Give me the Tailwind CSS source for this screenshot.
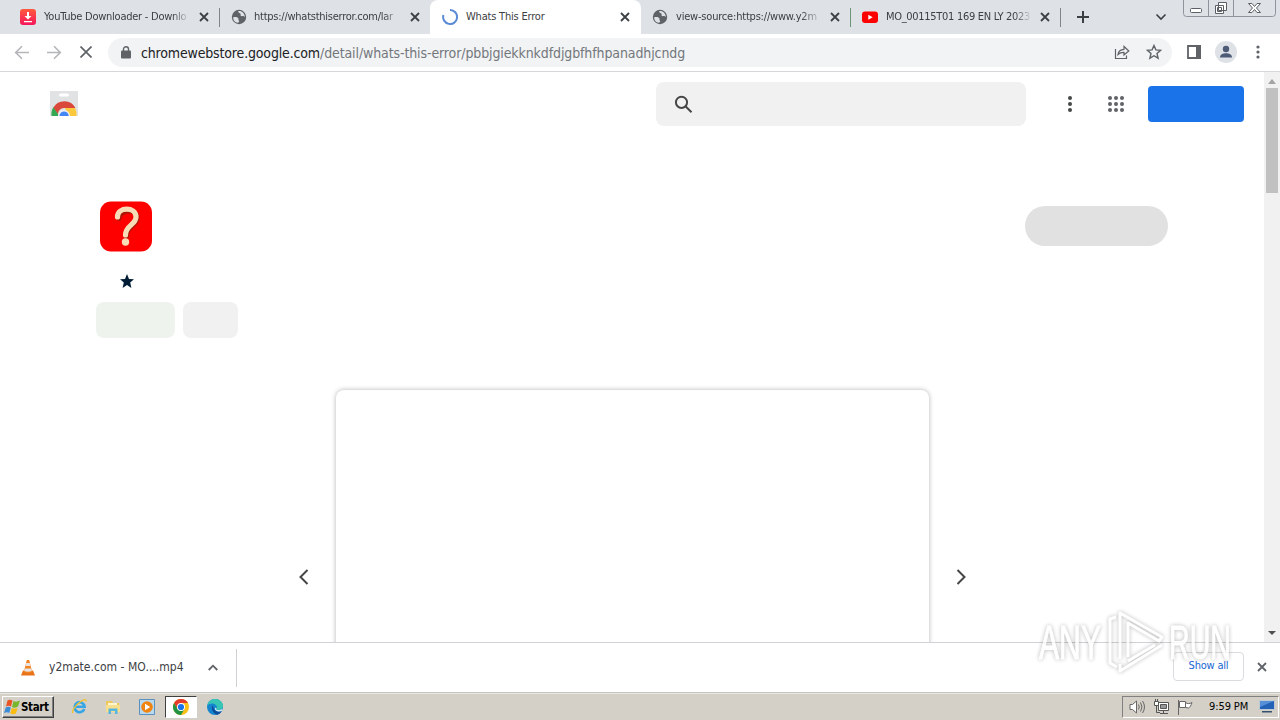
<!DOCTYPE html>
<html lang="en">
<head>
<meta charset="utf-8">
<title>Whats This Error</title>
<script src="https://cdn.jsdelivr.net/npm/@tailwindcss/browser@4"></script>
</head>
<body class="relative flex h-[720px] w-[1280px] flex-col overflow-hidden bg-white font-['DejaVu_Sans_Condensed','DejaVu_Sans','Noto_Sans',sans-serif] text-[11px] text-[#3c4043]">
<svg class="hidden">
  <symbol id="x" viewBox="0 0 10 10"><path d="M1 1l8 8M9 1L1 9" stroke="currentColor" stroke-width="1.8" fill="none"/></symbol>
  <symbol id="globe" viewBox="0 0 16 16"><circle cx="8" cy="8" r="7.2" fill="#5f6368"/><path d="M2.200 8.300C4 7.500 6.500 8 7.200 9s-.2 1.700.6 2.500.2 1.800-.9 2.200C4 13.700 2 11 2.200 8.300zM7 2.200c.8.600.3 1.500 1.300 1.900s1.700.8 1.300 1.900 1 1.300 2 1 1.700.6 2.100 1C14 4.500 10.500 1.500 7 2.200z" fill="#dee1e6"/></symbol>
</svg>

<!-- Tab strip -->
<header class="flex h-[34px] shrink-0 bg-[#dee1e6] tracking-[-0.2px]">
  <div class="flex h-full w-[220px] shrink-0 items-center pl-5">
    <svg class="size-4 shrink-0" viewBox="0 0 16 16"><defs><linearGradient id="dl" x2="0" y2="1"><stop stop-color="#ff5a3c"/><stop offset="1" stop-color="#f5165c"/></linearGradient></defs><rect width="16" height="16" rx="3" fill="url(#dl)"/><path d="M7 3h2v4h2.500L8 10.500 4.500 7H7zM4 12h8v1.300H4z" fill="#fff"/></svg>
    <span class="mt-px ml-2 w-[146px] shrink-0 overflow-hidden tracking-[-0.25px] whitespace-nowrap mask-r-from-88%">YouTube Downloader - Downlo</span>
    <svg class="ml-[9px] size-[10px] shrink-0"><use href="#x"/></svg>
    <i class="ml-auto h-[19px] w-px bg-[#808388]"></i>
  </div>
  <div class="flex h-full w-[210px] shrink-0 items-center pl-[11px]">
    <svg class="size-4 shrink-0"><use href="#globe"/></svg>
    <span class="mt-px ml-[7px] w-[147px] shrink-0 overflow-hidden tracking-[-0.25px] whitespace-nowrap mask-r-from-88%">https://whatsthiserror.com/lar</span>
    <svg class="ml-[9px] size-[10px] shrink-0"><use href="#x"/></svg>
  </div>
  <div class="flex h-full w-[211px] shrink-0 items-center rounded-t-lg bg-white pl-3">
    <svg class="size-4 shrink-0" viewBox="0 0 16 16"><path d="M8 1a7 7 0 1 1-6.600 5" fill="none" stroke="#5b8ad6" stroke-width="2"/></svg>
    <span class="mt-px ml-2 w-[146px] shrink-0 whitespace-nowrap">Whats This Error</span>
    <svg class="ml-[8px] size-[10px] shrink-0"><use href="#x"/></svg>
  </div>
  <div class="flex h-full w-[210px] shrink-0 items-center pl-[11px]">
    <svg class="size-4 shrink-0"><use href="#globe"/></svg>
    <span class="mt-px ml-2 w-[147px] shrink-0 overflow-hidden whitespace-nowrap mask-r-from-85%">view-source:https://www.y2m</span>
    <svg class="ml-[7px] size-[10px] shrink-0"><use href="#x"/></svg>
    <i class="ml-auto h-[19px] w-px bg-[#6c9477]"></i>
  </div>
  <div class="flex h-full w-[210px] shrink-0 items-center pl-[11px]">
    <svg class="size-4 shrink-0" viewBox="0 0 16 16"><rect y="2.500" width="16" height="11.500" rx="3" fill="#f00"/><path d="M6.300 5.700v5L10.700 8.200z" fill="#fff"/></svg>
    <span class="mt-px ml-2 w-[146px] shrink-0 overflow-hidden tracking-[-0.3px] whitespace-nowrap mask-r-from-88%">MO_00115T01 169 EN LY 2023</span>
    <svg class="ml-[8px] size-[10px] shrink-0"><use href="#x"/></svg>
    <i class="ml-auto h-[19px] w-px bg-[#808388]"></i>
  </div>
  <svg class="mt-[11px] ml-4 size-3 shrink-0" viewBox="0 0 12 12"><path d="M6 0v12M0 6h12" stroke="#3c4043" stroke-width="2"/></svg>
  <svg class="mt-[13px] ml-[66px] h-2 w-3 shrink-0" viewBox="0 0 12 8"><path d="M1.500 1.500L6 6l4.500-4.500" fill="none" stroke="#3c4043" stroke-width="1.600"/></svg>
  <svg class="ml-4 h-[17px] w-[94px] shrink-0" viewBox="0 0 94 17" fill="none"><path d="M.5 0v13.500q0 3 3 3h86q3 0 3-3V0M25.500 0v16M50.500 0v16" stroke="#8f939b"/><rect x="7.500" y="8.500" width="11" height="4" rx="1" fill="#fff" stroke="#5c5f66"/><path d="M35.500 2.500h8v8h-8zM32.500 5.500h8v8h-8z" fill="#fff" stroke="#5c5f66"/><path d="M34.500 7.500h4v4h-4z" stroke="#5c5f66"/><path d="M65.500 3.500h3.500l2.500 3 2.500-3h3.500L73.500 8l4 4.500H74l-2.500-3-2.500 3h-3.500l4-4.500z" fill="#fff" stroke="#5c5f66"/></svg>
</header>

<!-- Toolbar -->
<div class="flex h-[38px] shrink-0 items-center border-b border-[#d5d7da] bg-white">
  <svg class="ml-[14px] h-4 w-4" viewBox="0 0 16 16" fill="none" stroke="#b4b6b9" stroke-width="1.600"><path d="M15 7.500H2M8 1.200L1.700 7.500 8 13.800"/></svg>
  <svg class="ml-4 h-4 w-4" viewBox="0 0 16 16" fill="none" stroke="#b4b6b9" stroke-width="1.600"><path d="M1 7.500h13M8 1.200L14.300 7.500 8 13.800"/></svg>
  <svg class="mb-px ml-[18px] size-3" viewBox="0 0 12 12"><path d="M.5.500l11 11M11.500.500l-11 11" stroke="#5f6368" stroke-width="1.700"/></svg>
  <div class="ml-4 flex h-[29px] w-[1064px] items-center rounded-full bg-[#f1f3f4] pl-[13px] text-[14px]">
    <svg class="mb-px h-[13px] w-[10px]" viewBox="0 0 10 13"><rect y="4.500" width="10" height="8" rx="1" fill="#5f6368"/><path d="M2.500 5V3.200a2.500 2.500 0 0 1 5 0V5" fill="none" stroke="#5f6368" stroke-width="1.400"/></svg>
    <span class="mt-px ml-[10px] w-[179px] tracking-[-0.16px] whitespace-nowrap text-[#202124]">chromewebstore.google.com</span><span class="mt-px tracking-[-0.11px] whitespace-nowrap text-[#73777c]">/detail/whats-this-error/pbbjgiekknkdfdjgbfhfhpanadhjcndg</span>
    <svg class="mb-px ml-auto size-4" viewBox="0 0 16 16" fill="none" stroke="#5f6368" stroke-width="1.200"><path d="M1.500 5v9.500h11v-3M4 10.500c.5-3.500 2.500-5 6-5.200V2.500L14.800 7 10 11V8.300C7 8.200 5.500 9 4 10.500z"/></svg>
    <svg class="mr-[10px] mb-px ml-4 size-4" viewBox="0 0 16 16" fill="none" stroke="#5f6368" stroke-width="1.400"><path d="M8 1.500l1.900 4.400 4.700.4-3.600 3.200 1.100 4.700L8 11.700l-4.100 2.500L5 9.500 1.400 6.300l4.700-.4z"/></svg>
  </div>
  <svg class="mb-px ml-[15px] h-[14px] w-[14px]" viewBox="0 0 14 14"><path d="M1 1h12v12H1z" fill="none" stroke="#5f6368" stroke-width="1.800"/><path d="M9 0h5v14H9z" fill="#5f6368"/></svg>
  <svg class="mb-px ml-[14px] size-[22px]" viewBox="0 0 22 22"><circle cx="11" cy="11" r="11" fill="#dee1e6"/><circle cx="11" cy="8" r="3.200" fill="#4d5b76"/><path d="M5 16.500c0-3 3-4.300 6-4.300s6 1.300 6 4.300z" fill="#4d5b76"/></svg>
  <svg class="mb-px ml-[19px] h-[14px] w-1" viewBox="0 0 4 14" fill="#5f6368"><circle cx="2" cy="2" r="1.600"/><circle cx="2" cy="7" r="1.600"/><circle cx="2" cy="12" r="1.600"/></svg>
</div>

<!-- Page -->
<div class="flex h-[570px] shrink-0">
  <main class="flex w-[1264px] flex-col overflow-hidden">
    <div class="flex h-[64px] shrink-0 items-center pl-[49px]">
      <svg class="h-[26px] w-[30px]" viewBox="0 0 30 26"><path d="M1 0h28v25H1z" fill="#e1e2e4"/><rect x="10" y="2.500" width="10" height="3" rx="1.500" fill="#fff"/><path d="M2.500 25A12.500 12.500 0 0 1 5 15.500L10 25z" fill="#34a853"/><path d="M4.500 16.500A12.500 12.500 0 0 1 26.500 17H15a6 6 0 0 0-6 6z" fill="#d9483b"/><path d="M26 17a13 13 0 0 1 1.500 8H19l-3-8z" fill="#fdc93c"/><path d="M9 25a6 6 0 0 1 12 0z" fill="#f1f1f1"/><path d="M10.500 25a4.600 4.600 0 0 1 9.200 0z" fill="#4285f4"/></svg>
      <div class="ml-[577px] flex h-11 w-[370px] items-center rounded-lg bg-[#f1f1f1] pl-[18px]">
        <svg class="size-[19px]" viewBox="0 0 19 19" fill="none" stroke="#444746" stroke-width="2"><circle cx="7.500" cy="7.300" r="5.600"/><path d="M11.500 11.300l6 6"/></svg>
      </div>
      <svg class="ml-[42px] h-4 w-1" viewBox="0 0 4 16" fill="#444746"><circle cx="2" cy="2" r="2"/><circle cx="2" cy="8" r="2"/><circle cx="2" cy="14" r="2"/></svg>
      <svg class="ml-9 size-4" viewBox="0 0 16 16" fill="#5f6368"><circle cx="2" cy="2" r="2"/><circle cx="8" cy="2" r="2"/><circle cx="14" cy="2" r="2"/><circle cx="2" cy="8" r="2"/><circle cx="8" cy="8" r="2"/><circle cx="14" cy="8" r="2"/><circle cx="2" cy="14" r="2"/><circle cx="8" cy="14" r="2"/><circle cx="14" cy="14" r="2"/></svg>
      <div class="ml-6 h-9 w-24 rounded bg-[#1a73e8]"></div>
    </div>
    <section class="shrink-0 px-24 pt-[65px]">
      <div class="flex items-center justify-between">
        <svg class="ml-1 h-[51px] w-[52px]" viewBox="0 0 52 51"><rect width="52" height="50" y=".5" rx="11" fill="#f00"/><path d="M17.500 16c0-9 18-11 18-.5 0 8-10.500 8-10.500 18" transform="translate(1.500 1.500)" fill="none" stroke="#a91708" stroke-width="5" stroke-linecap="round"/><path d="M17.500 16c0-10.500 18.500-10.500 18.500 0 0 8-10.500 8-10.500 18" fill="none" stroke="#f8dcb8" stroke-width="5.200" stroke-linecap="round"/><circle cx="25.500" cy="41" r="3.700" fill="#f8dcb8"/></svg>
        <div class="mb-0.5 h-10 w-[143px] rounded-full bg-[#e1e1e1]"></div>
      </div>
      <svg class="mt-[22px] ml-6 size-[14px]" viewBox="0 0 14 14"><path d="M7 0l2 4.900 5 .4-3.800 3.300L11.400 14 7 11.100 2.600 14l1.200-5.400L0 5.300l5-.4z" fill="#001d35"/></svg>
      <div class="mt-[14px] flex gap-2"><div class="h-9 w-[79px] rounded-lg bg-[#eef3ee]"></div><div class="h-9 w-[55px] rounded-lg bg-[#f1f1f1]"></div></div>
    </section>
    <section class="mt-[52px] flex grow pl-[298px]">
      <svg class="mt-[179px] h-4 w-3" viewBox="0 0 12 16"><path d="M9.500 1L2.500 8l7 7" fill="none" stroke="#444746" stroke-width="2"/></svg>
      <div class="ml-[26px] h-[334px] w-[593px] rounded-lg bg-white shadow-[0_0_5px_rgba(0,0,0,0.3)]"></div>
      <svg class="mt-[179px] ml-[26px] h-4 w-3" viewBox="0 0 12 16"><path d="M2.500 1l7 7-7 7" fill="none" stroke="#444746" stroke-width="2"/></svg>
    </section>
  </main>
  <div class="flex w-4 flex-col items-center bg-[#f1f1f1] pt-[7px] pb-[7px]">
    <svg class="h-[5px] w-2" viewBox="0 0 8 5"><path d="M0 5l4-5 4 5z" fill="#a3a3a3"/></svg>
    <div class="mt-1 h-[105px] w-3 bg-[#c1c1c1]"></div>
    <svg class="mt-auto h-1 w-2" viewBox="0 0 8 4"><path d="M0 0l4 4 4-4z" fill="#505050"/></svg>
  </div>
</div>

<!-- Download shelf -->
<div class="flex h-[50px] shrink-0 items-center border-t border-[#d0d2d5] bg-white">
  <svg class="ml-[21px] h-4 w-[14px]" viewBox="0 0 14 16"><path d="M2 10.500h10l2 5H0z" fill="#e8731a"/><path d="M5.800 0h2.400l3 12q-4.200 2-8.400 0z" fill="#f58220"/><path d="M5.300 3h3.400l.8 3h-5zM3.900 8.500h6.200l.7 2.500q-3.800 1.300-7.600 0z" fill="#e5e5e5"/></svg>
  <span class="mb-0.5 ml-[14px] w-[136px] tracking-[0.04px] whitespace-nowrap text-[12px]">y2mate.com - MO....mp4</span>
  <svg class="ml-[23px] h-[7px] w-[10px]" viewBox="0 0 10 7"><path d="M.7 6L5 1.700 9.300 6" fill="none" stroke="#5f6368" stroke-width="1.800"/></svg>
  <i class="ml-[18px] h-[38px] w-px bg-[#cfd1d4]"></i>
  <div class="mb-0.5 ml-auto flex h-[29px] w-[71px] items-center justify-center rounded border border-[#dadce0] tracking-[-0.2px] whitespace-nowrap text-[#1967d2]">Show all</div>
  <svg class="mr-[13px] mb-0.5 ml-[13px] size-[10px] text-[#5f6368]"><use href="#x"/></svg>
</div>

<!-- Taskbar -->
<footer class="flex h-[28px] shrink-0 items-center border-t border-[#c4c4c0] bg-[#d4d0c8] text-black shadow-[inset_0_1px_#e9e7e2]">
  <div class="ml-[2px] flex h-[22px] w-[52px] items-center border border-t-white border-r-[#404040] border-b-[#404040] border-l-white pl-px shadow-[inset_-1px_-1px_#808080]">
    <svg class="size-4 shrink-0" viewBox="0 0 16 16"><path d="M3.500 1.500Q6 0 8.500 1.500L7 7.500Q4.500 6 2 7.500z" fill="#ea5424"/><path d="M9.500 2q3 1.500 6.500-.5L14 7.500q-3 2-6 .5z" fill="#78b72b"/><path d="M1.800 8.500q2.500-1.500 5 0l-1.500 5.500Q3 12.500 0 14z" fill="#3c8cd8"/><path d="M7.800 9q2.500 1.500 5.800 0L12 14.500q-3 1.500-5.700 0z" fill="#fbbc12"/></svg>
    <b class="mt-0.5 ml-px text-[11.500px] tracking-[-0.35px]">Start</b>
  </div>
  <svg class="ml-[17px] size-[17px]" viewBox="0 0 17 17" fill="none"><path d="M13.300 11A5 5 0 1 1 13.600 8.700H5" stroke="#36a5e5" stroke-width="2.600"/><path d="M2 15c-2-2 3-8 7-11s6.500-3 6-.5" stroke="#f1c232" stroke-width="1.400"/></svg>
  <svg class="ml-[17px] size-4" viewBox="0 0 16 16"><path d="M1 2h6l1 2h6v9H1z" fill="#edc85d"/><path d="M3 4h9v7H3z" fill="#fff8cf"/><path d="M1 6h14v7H1z" fill="#f7df8e"/><path d="M3.500 15V9.500h9V15h-2.500v-3H6v3z" fill="#58b5dc"/></svg>
  <svg class="ml-[18px] size-4" viewBox="0 0 16 16"><path d="M.5.500h15v15H.5z" fill="#b9d9ef" stroke="#5b91bd"/><circle cx="8" cy="8" r="5.800" fill="#f08412"/><path d="M6 4.800v6.400L11.200 8z" fill="#fff"/></svg>
  <div class="ml-[10px] flex h-[22px] w-8 items-center justify-center border border-t-[#404040] border-r-white border-b-white border-l-[#404040] bg-white">
    <svg class="size-4" viewBox="0 0 16 16"><circle cx="8" cy="8" r="8" fill="#fbc116"/><path d="M1.070 4A8 8 0 0 1 14.930 4H8L4.500 10z" fill="#e33b2e"/><path d="M1.070 4A8 8 0 0 0 8 16l3.500-6H4.500z" fill="#229342"/><circle cx="8" cy="8" r="4" fill="#fff"/><circle cx="8" cy="8" r="3.100" fill="#1a73e8"/></svg>
  </div>
  <svg class="ml-[10px] size-4" viewBox="0 0 16 16"><circle cx="8" cy="8" r="8" fill="#1585cf"/><path d="M.2 7C1 2.500 4.500 0 8 0c5 0 8 3.500 8 6.500S13.500 11 11 11c-2 0-2-1-1.500-1.500C11 7 8 4.500 5 4.500 2.500 4.500 1 5.500.2 7z" fill="#37c5b5"/><path d="M6 6.500C3.500 9 5.500 14 10 15.700c2-.5 3.800-1.700 4.800-3.700-3.500 1.500-8.500.5-8.800-5.500z" fill="#0c4c9b"/><path d="M9.500 9.500C8.800 10.500 10 11 11.500 11c1.500 0 3-.5 3.800-1.500v2.300c-3.500 1.700-8 .5-7.300-3.300z" fill="#d4e8ee"/></svg>
  <div class="mr-[1px] ml-auto flex h-[22px] w-[157px] items-center border border-t-[#808080] border-r-white border-b-white border-l-[#808080] pl-[6px]">
    <svg class="size-4 shrink-0" viewBox="0 0 16 16" fill="none" stroke="#666"><path d="M1 5.500h2.500L7.500 2v12l-4-3.500H1z" fill="#fff"/><path d="M9.500 5.500q1.500 2.500 0 5M11.500 3.500q3 4.500 0 9M13.500 2q4 6 0 12"/></svg>
    <svg class="ml-2 size-4 shrink-0" viewBox="0 0 16 16" fill="none" stroke="#555"><path d="M5.500 3.500h10v8h-10z" fill="#fff"/><path d="M7.500 5.500h6v4h-6z" fill="#999"/><path d="M7 14.500h8M10.500 12v2M3.500 7v6.500H7"/><path d="M1.500 2.500h4v4h-4zM2.500 0v2M4.500 0v2" fill="#fff"/></svg>
    <svg class="ml-2 size-4 shrink-0" viewBox="0 0 16 16" fill="#fff" stroke="#666"><path d="M1.500 1v15M2.500 2.500h6v6h-6zM8.500 3.500c2 1.500 4 1.500 6.500 0-1 3-2 5-3.500 5.500l-3-.5z"/></svg>
    <span class="mt-0.5 ml-4 w-[40px] shrink-0 tracking-[-0.1px] whitespace-nowrap">9:59 PM</span>
    <svg class="ml-[10px] h-[13px] w-4 shrink-0" viewBox="0 0 16 13"><path d="M.5.500h15v9H.5z" fill="#2462b8" stroke="#bfc9d4"/><path d="M1 1h14L1 7z" fill="#568fd7"/><path d="M3 11h10v1.500H3z" fill="#34506f"/></svg>
  </div>
</footer>

<!-- Watermark -->
<svg class="pointer-events-none absolute top-[604px] left-[1034px] h-[72px] w-[204px] opacity-80 drop-shadow-[0_0_2px_rgba(0,0,0,0.35)]" viewBox="0 0 204 72" fill="none" stroke="#fff" stroke-width="3" stroke-linejoin="round">
  <g font-family="Liberation Sans" font-size="49" fill="#fff" stroke-width="1"><text x="5" y="55" textLength="62" lengthAdjust="spacingAndGlyphs">ANY</text><text x="135" y="55" textLength="62" lengthAdjust="spacingAndGlyphs">RUN</text></g>
  <path d="M82 13l-6 2v44l7 4M86 55V9l42 24-3 4-31-18v34M86 60v7l42-26M94 57l27-16"/>
</svg>
</body>
</html>
